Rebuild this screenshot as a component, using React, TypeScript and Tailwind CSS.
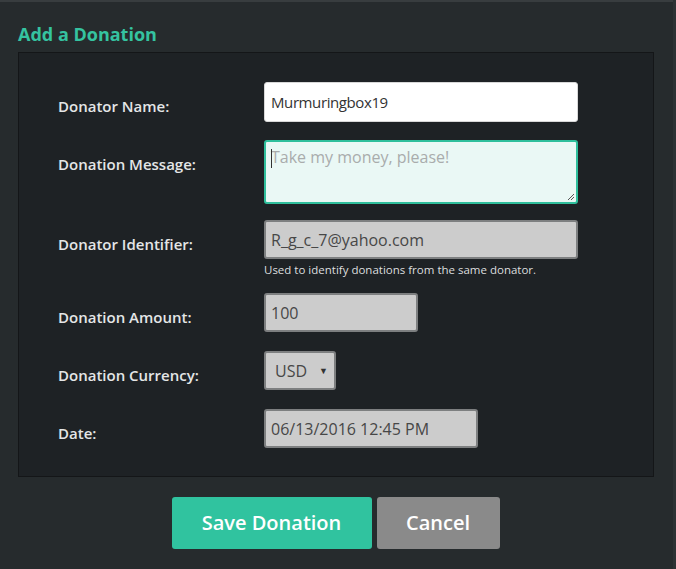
import React from "react";

const font = { fontFamily: '"Open Sans", "Liberation Sans", sans-serif' };

const Row = ({
  label,
  children,
  className = "",
}: {
  label: string;
  children: React.ReactNode;
  className?: string;
}) => (
  <div className={`flex ${className}`}>
    <div className="w-[206px] shrink-0 pt-[14px] leading-[20px] text-[15px] font-semibold text-[#e4e6e7]">
      {label}
    </div>
    <div>{children}</div>
  </div>
);

const grayInput =
  "h-[39px] rounded-[3px] border-2 border-[#7d7f80] bg-[#cccccc] px-[5px] flex items-center text-[16px] text-[#474747]";

export default function App() {
  return (
    <div className="w-[676px] h-[569px] flex bg-[#2d3234]" style={font}>
      <div className="w-[673px] h-full bg-[#262b2d] border-t-2 border-[#383d3f] flex flex-col">
        {/* TITLE */}
        <h2 className="pl-[18px] pt-[20px] h-[50px] text-[18px] font-bold text-[#35c3a0] leading-[24px]">
          Add a Donation
        </h2>

        {/* FORM PANEL */}
        <div className="ml-[18px] w-[636px] h-[425px] bg-[#1e2225] border border-[#141618] pl-[39px] pt-[29px]">
          <Row label="Donator Name:">
            <div className="w-[314px] h-[40px] rounded-[3px] border border-[#d8d8d8] bg-white px-[6px] flex items-center text-[15px] tracking-[-0.4px] text-[#333]">
              Murmuringbox19
            </div>
          </Row>

          <Row label="Donation Message:" className="mt-[18px]">
            <div className="relative w-[314px] h-[64px] rounded-[3px] border-2 border-[#2fbf9c] bg-[#eaf8f5] px-[5px] pt-[3px] text-[16px] text-[#a9acac]">
              <span className="absolute left-[5px] top-[7px] w-px h-[19px] bg-[#333]" />
              Take my money, please!
              <svg
                className="absolute right-[1px] bottom-[1px]"
                width="8"
                height="8"
                viewBox="0 0 8 8"
              >
                <path d="M7 1L1 7M7 4L4 7" stroke="#555" strokeWidth="1" />
              </svg>
            </div>
          </Row>

          <Row label="Donator Identifier:" className="mt-[16px]">
            <div className={`w-[314px] ${grayInput}`}>R_g_c_7@yahoo.com</div>
            <p className="mt-[3px] text-[11.5px] leading-[16px] text-[#dcdedf]">
              Used to identify donations from the same donator.
            </p>
          </Row>

          <Row label="Donation Amount:" className="mt-[15px]">
            <div className={`w-[154px] ${grayInput}`}>100</div>
          </Row>

          <Row label="Donation Currency:" className="mt-[19px]">
            <div className={`w-[72px] ${grayInput} justify-between pl-[9px] pr-[6px]`}>
              <span>USD</span>
              <span className="text-[9px] text-[#333]">▼</span>
            </div>
          </Row>

          <Row label="Date:" className="mt-[19px]">
            <div className={`w-[214px] ${grayInput}`}>06/13/2016 12:45 PM</div>
          </Row>
        </div>

        {/* ACTIONS */}
        <div className="flex justify-center gap-[5px] mt-[20px] pr-[2px]">
          <button className="w-[200px] h-[52px] rounded-[3px] bg-[#30c39f] text-white text-[20px] font-semibold">
            Save Donation
          </button>
          <button className="w-[123px] h-[52px] rounded-[3px] bg-[#8a8a8a] text-white text-[20px] font-semibold">
            Cancel
          </button>
        </div>
      </div>
    </div>
  );
}
